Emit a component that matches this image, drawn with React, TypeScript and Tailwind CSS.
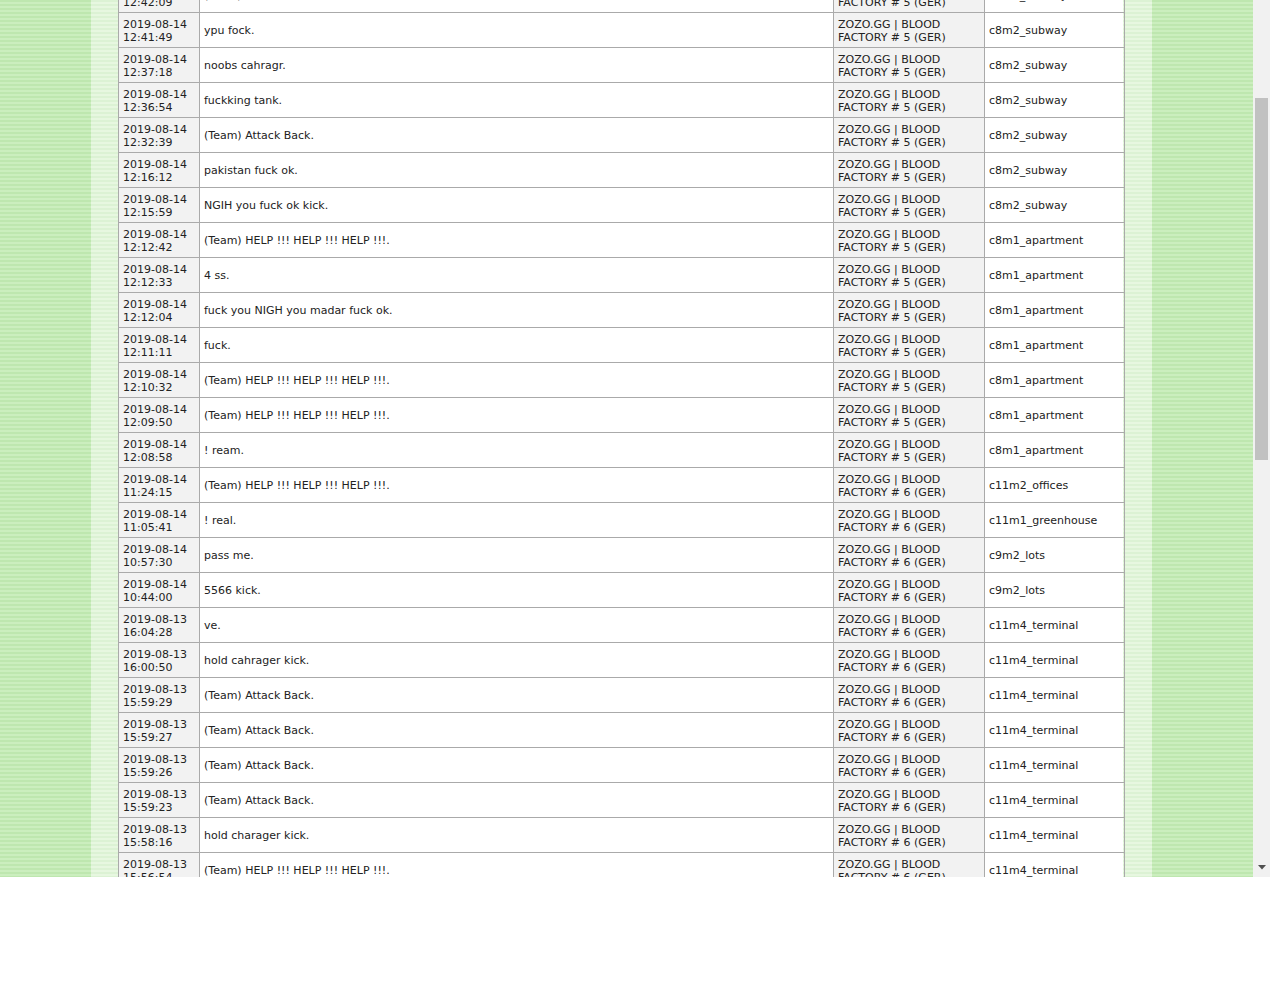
import React from "react";

type Row = { d: string; t: string; msg: string; srv: string; map: string };

const rows: Row[] = [
  { d: "2019-08-14", t: "12:42:09", msg: "(Team) Attack Back.", srv: "5", map: "c8m2_subway" },
  { d: "2019-08-14", t: "12:41:49", msg: "ypu fock.", srv: "5", map: "c8m2_subway" },
  { d: "2019-08-14", t: "12:37:18", msg: "noobs cahragr.", srv: "5", map: "c8m2_subway" },
  { d: "2019-08-14", t: "12:36:54", msg: "fuckking tank.", srv: "5", map: "c8m2_subway" },
  { d: "2019-08-14", t: "12:32:39", msg: "(Team) Attack Back.", srv: "5", map: "c8m2_subway" },
  { d: "2019-08-14", t: "12:16:12", msg: "pakistan fuck ok.", srv: "5", map: "c8m2_subway" },
  { d: "2019-08-14", t: "12:15:59", msg: "NGIH you fuck ok kick.", srv: "5", map: "c8m2_subway" },
  { d: "2019-08-14", t: "12:12:42", msg: "(Team) HELP !!! HELP !!! HELP !!!.", srv: "5", map: "c8m1_apartment" },
  { d: "2019-08-14", t: "12:12:33", msg: "4 ss.", srv: "5", map: "c8m1_apartment" },
  { d: "2019-08-14", t: "12:12:04", msg: "fuck you NIGH you madar fuck ok.", srv: "5", map: "c8m1_apartment" },
  { d: "2019-08-14", t: "12:11:11", msg: "fuck.", srv: "5", map: "c8m1_apartment" },
  { d: "2019-08-14", t: "12:10:32", msg: "(Team) HELP !!! HELP !!! HELP !!!.", srv: "5", map: "c8m1_apartment" },
  { d: "2019-08-14", t: "12:09:50", msg: "(Team) HELP !!! HELP !!! HELP !!!.", srv: "5", map: "c8m1_apartment" },
  { d: "2019-08-14", t: "12:08:58", msg: "! ream.", srv: "5", map: "c8m1_apartment" },
  { d: "2019-08-14", t: "11:24:15", msg: "(Team) HELP !!! HELP !!! HELP !!!.", srv: "6", map: "c11m2_offices" },
  { d: "2019-08-14", t: "11:05:41", msg: "! real.", srv: "6", map: "c11m1_greenhouse" },
  { d: "2019-08-14", t: "10:57:30", msg: "pass me.", srv: "6", map: "c9m2_lots" },
  { d: "2019-08-14", t: "10:44:00", msg: "5566 kick.", srv: "6", map: "c9m2_lots" },
  { d: "2019-08-13", t: "16:04:28", msg: "ve.", srv: "6", map: "c11m4_terminal" },
  { d: "2019-08-13", t: "16:00:50", msg: "hold cahrager kick.", srv: "6", map: "c11m4_terminal" },
  { d: "2019-08-13", t: "15:59:29", msg: "(Team) Attack Back.", srv: "6", map: "c11m4_terminal" },
  { d: "2019-08-13", t: "15:59:27", msg: "(Team) Attack Back.", srv: "6", map: "c11m4_terminal" },
  { d: "2019-08-13", t: "15:59:26", msg: "(Team) Attack Back.", srv: "6", map: "c11m4_terminal" },
  { d: "2019-08-13", t: "15:59:23", msg: "(Team) Attack Back.", srv: "6", map: "c11m4_terminal" },
  { d: "2019-08-13", t: "15:58:16", msg: "hold charager kick.", srv: "6", map: "c11m4_terminal" },
  { d: "2019-08-13", t: "15:56:54", msg: "(Team) HELP !!! HELP !!! HELP !!!.", srv: "6", map: "c11m4_terminal" },
  { d: "2019-08-13", t: "15:55:40", msg: "(Team) Attack Back.", srv: "6", map: "c11m4_terminal" },
];

export default function App() {
  return (
    <div className="w-[1280px] h-[984px] bg-white">
      <div className="flex w-[1270px] h-[877px] overflow-hidden">
        <div className="flex w-[1253px] h-full bg-[repeating-linear-gradient(to_bottom,#bee7af_0px,#bee7af_2px,#cbeebe_2px,#cbeebe_4px)]">
          <div className="w-[91px] shrink-0" />
          <div className="w-[1061px] shrink-0 px-[27px] overflow-hidden bg-[repeating-linear-gradient(to_bottom,#dcf2d4_0px,#dcf2d4_2px,#e7f7e0_2px,#e7f7e0_4px)]">
            <div
              className="-mt-[23px] w-[1007px] text-[11px] leading-[13px] text-[#222]"
              style={{ fontFamily: '"DejaVu Sans", Verdana, sans-serif' }}
            >
              {rows.map((r, i) => (
                <div key={i} className="flex h-[35px] border-t border-[#aaaaaa] border-r">
                  <div className="w-[81px] shrink-0 border-l border-[#aaaaaa] bg-[#f2f2f2] px-[4px] pt-[2px] flex flex-col justify-center">
                    <span>{r.d}</span>
                    <span>{r.t}</span>
                  </div>
                  <div className="w-[634px] shrink-0 border-l border-[#aaaaaa] bg-white px-[4px] flex items-center whitespace-nowrap">
                    {r.msg}
                  </div>
                  <div className="w-[151px] shrink-0 border-l border-[#aaaaaa] bg-[#f2f2f2] px-[4px] pt-[2px] flex flex-col justify-center whitespace-nowrap">
                    <span>ZOZO.GG | BLOOD</span>
                    <span>FACTORY # {r.srv} (GER)</span>
                  </div>
                  <div className="w-[139px] shrink-0 border-l border-[#aaaaaa] bg-white px-[4px] flex items-center whitespace-nowrap">
                    {r.map}
                  </div>
                </div>
              ))}
            </div>
          </div>
          <div className="flex-1" />
        </div>
        <div className="w-[17px] h-full shrink-0 bg-[#f1f1f1] flex flex-col items-center">
          <div className="h-[98px] shrink-0" />
          <div className="w-[13px] h-[362px] shrink-0 bg-[#c1c1c1]" />
          <div className="flex-1" />
          <div className="h-[17px] shrink-0 flex items-start justify-center pt-[5px]">
            <svg width="8" height="5" viewBox="0 0 8 5">
              <polygon points="0,0 8,0 4,4.5" fill="#505050" />
            </svg>
          </div>
        </div>
      </div>
    </div>
  );
}
